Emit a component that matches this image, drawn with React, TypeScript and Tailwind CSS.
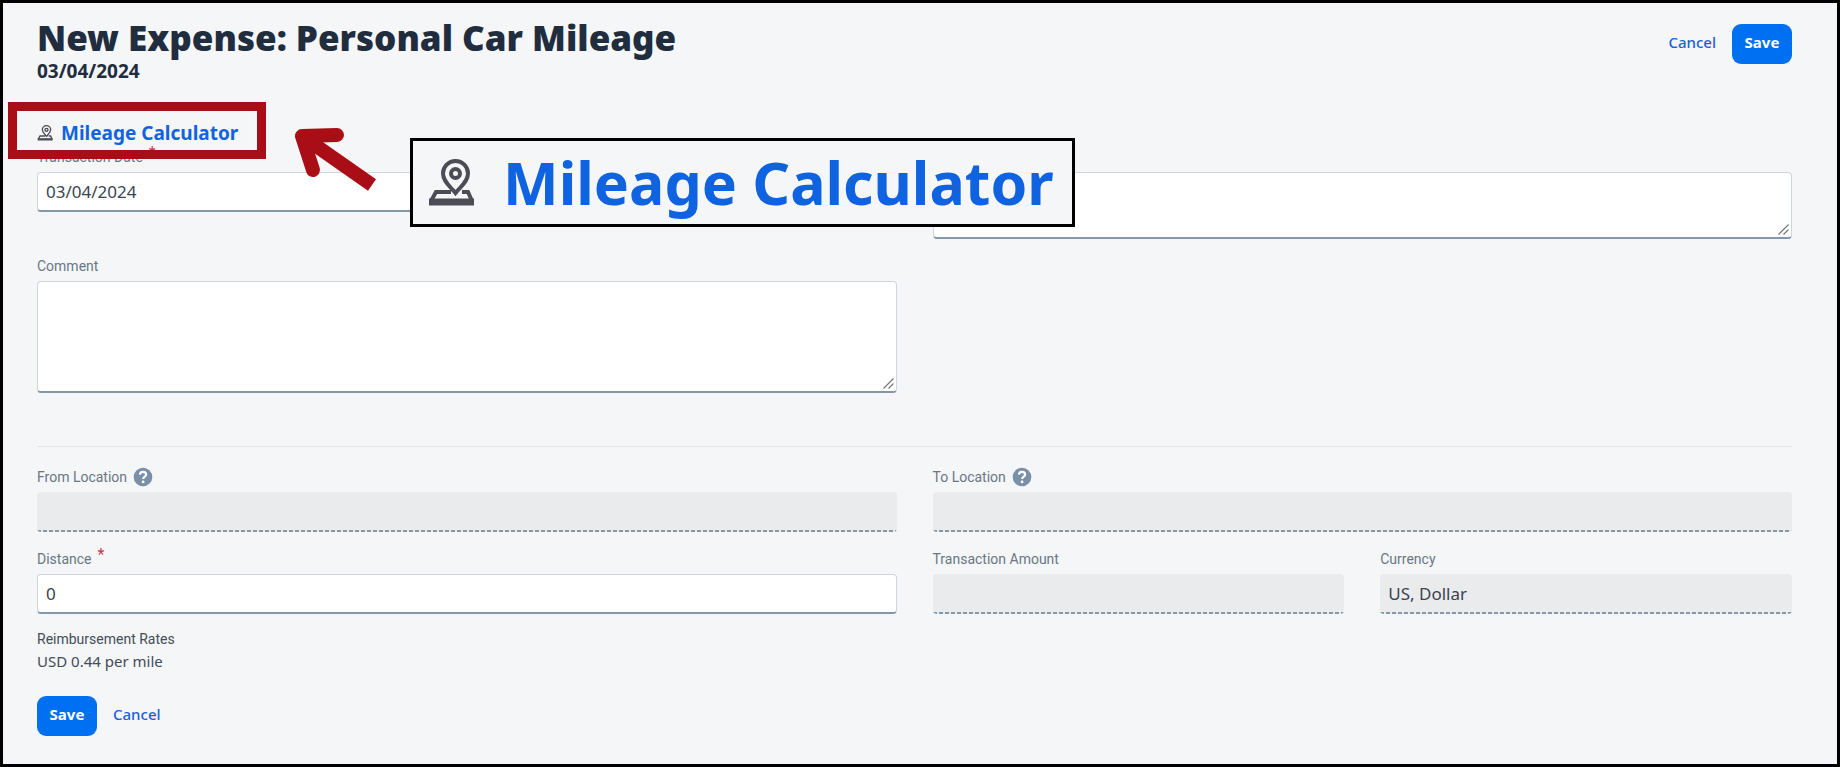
import React from 'react';
import clsx from 'clsx';

const EDITABLE = 'border border-[#cfd5dc] border-b-2 border-b-[#8496a9] bg-white';
const LOCKED =
  'pb-0.5 bg-[#eaebed] bg-[repeating-linear-gradient(90deg,#8798ab_0_4px,transparent_4px_6px)] bg-[length:100%_2px] bg-bottom bg-no-repeat';

function Label({ htmlFor, required, help, children }: {
  htmlFor: string;
  required?: boolean;
  help?: string;
  children: React.ReactNode;
}) {
  return (
    <div className="mb-[5px] flex h-5 items-center gap-1.5 font-[Roboto,sans-serif] text-[14px] leading-5 text-[#6a7685]">
      <label htmlFor={htmlFor} className="flex gap-1.5">
        {children}
        {required && <span className="-mt-1 text-[16px] text-[#c5384b]">*</span>}
      </label>
      {help && (
        <button type="button" aria-label={help}>
          <HelpIcon />
        </button>
      )}
    </div>
  );
}

function TextField({ id, value, disabled }: { id: string; value?: string; disabled?: boolean }) {
  return (
    <input
      id={id}
      type="text"
      defaultValue={value}
      disabled={disabled}
      className={clsx(
        'block h-10 w-full rounded-[4px] px-2 text-[17px] text-[#3b4350] outline-none',
        disabled ? LOCKED : EDITABLE
      )}
    />
  );
}

function TextArea({ className, ...rest }: React.ComponentProps<'textarea'>) {
  return (
    <div className="relative">
      <textarea
        {...rest}
        className={clsx('block w-full resize-none rounded-[4px] p-2 text-[17px] outline-none', EDITABLE, className)}
      />
      {/* Resize grip */}
      <svg
        viewBox="0 0 11 11"
        className="pointer-events-none absolute bottom-1 right-[3px] h-[11px] w-[11px]"
        stroke="#6f7278"
        strokeWidth="1.1"
        aria-hidden="true"
      >
        <path d="M.5 10.500l10-10M5.500 10.500l5-5" />
      </svg>
    </div>
  );
}

function HelpIcon() {
  return (
    <svg viewBox="0 0 20 20" className="block h-5 w-5" aria-hidden="true">
      <circle cx="10" cy="10" r="9.3" fill="#7a8fa8" />
      <path
        d="M6.9 7.6C7 5.8 8.2 4.8 10 4.8s3.1 1 3.1 2.6c0 2.3-2.9 2.3-2.9 4.5"
        fill="none"
        stroke="#fff"
        strokeWidth="2.2"
      />
      <circle cx="10.1" cy="14.9" r="1.4" fill="#fff" />
    </svg>
  );
}

function PinIcon({ className }: { className: string }) {
  return (
    <svg viewBox="0 0 48 48" className={className} fill="none" stroke="#4b4c56" aria-hidden="true">
      <path
        d="M28.500 34C24 28 16 23 16 14.500a12.500 12.500 0 0 1 25 0C41 23 33 28 28.500 34Z"
        strokeWidth="4"
      />
      <circle cx="28.500" cy="14.500" r="4.500" strokeWidth="4" />
      <path d="M24 33H9L4 42M35 33h6l4 9" strokeWidth="4" />
      <path d="M2 43h45" strokeWidth="7" />
    </svg>
  );
}

function Arrow() {
  return (
    <svg
      viewBox="0 0 86 68"
      className="pointer-events-none absolute left-[290px] top-[123px] h-[68px] w-[86px]"
      fill="none"
      stroke="#a90d15"
      strokeWidth="14"
      aria-hidden="true"
    >
      <path d="M44 9 9 10l11 34" strokeLinecap="round" strokeLinejoin="round" />
      <path d="M9 10l70 49" />
    </svg>
  );
}

function SaveButton() {
  return (
    <button type="button" className="h-10 w-[60px] rounded-[9px] bg-[#0070f2] pb-[3px] text-[15px] font-bold text-white">
      Save
    </button>
  );
}

function CancelButton() {
  return (
    <button type="button" className="h-10 pb-[3px] text-[15px] font-medium text-[#1a5fdc]">
      Cancel
    </button>
  );
}

export default function App() {
  return (
    <main className="relative min-h-screen border-[3px] border-black bg-[#f4f6f8] pb-7 pl-[34px] pr-[45px] font-['Noto_Sans',sans-serif]">
      <header className="flex items-start justify-between pt-[14px] text-[#1f2d3e]">
        <div>
          <h1 className="text-[35px] font-black leading-[42px]">New Expense: Personal Car Mileage</h1>
          <p className="text-[19px] font-bold leading-6">03/04/2024</p>
        </div>
        <div className="mt-[7px] flex gap-4">
          <CancelButton />
          <SaveButton />
        </div>
      </header>

      <div className="mt-[38px] flex h-6">
        <a href="#calculator" className="flex items-center gap-2 text-[19px] font-bold leading-6 text-[#1263df]">
          <PinIcon className="h-4 w-4" />
          Mileage Calculator
        </a>
      </div>

      <form className="mt-0.5">
        <div className="grid grid-cols-2 gap-x-9 gap-y-[17px]">
          <div>
            <Label htmlFor="date" required>Transaction Date</Label>
            <TextField id="date" value="03/04/2024" />
          </div>
          <div className="pt-[25px]">
            <TextArea aria-label="Trip details" className="h-[67px]" />
          </div>
          <div>
            <Label htmlFor="comment">Comment</Label>
            <TextArea id="comment" className="h-28" />
          </div>
        </div>

        <hr className="mb-5 mt-[53px] border-[#e3e5e8]" />

        <div className="grid grid-cols-2 gap-x-9 gap-y-[17px]">
          <div>
            <Label htmlFor="from" help="About From Location">From Location</Label>
            <TextField id="from" disabled />
          </div>
          <div>
            <Label htmlFor="to" help="About To Location">To Location</Label>
            <TextField id="to" disabled />
          </div>
          <div>
            <Label htmlFor="distance" required>Distance</Label>
            <TextField id="distance" value="0" />
          </div>
          <div className="grid grid-cols-2 gap-x-9">
            <div>
              <Label htmlFor="amount">Transaction Amount</Label>
              <TextField id="amount" disabled />
            </div>
            <div>
              <Label htmlFor="currency">Currency</Label>
              <TextField id="currency" value="US, Dollar" disabled />
            </div>
          </div>
        </div>

        <div className="mt-[15px] text-[#444c58]">
          <p className="font-[Roboto,sans-serif] text-[14px] leading-5">Reimbursement Rates</p>
          <p className="text-[15px] leading-6">USD 0.44 per mile</p>
        </div>

        <div className="mt-[23px] flex gap-4">
          <SaveButton />
          <CancelButton />
        </div>
      </form>

      {/* Callout: box around the link, arrow, enlarged copy of the link */}
      <div className="pointer-events-none absolute left-[5px] top-[99px] h-[57px] w-[258px] border-[9px] border-[#a90d15]" />
      <Arrow />
      <div className="absolute left-[407px] top-[135px] flex h-[89px] w-[665px] items-center gap-7 border-[3px] border-black bg-[#f4f6f8] pl-[14px]">
        <PinIcon className="h-12 w-12" />
        <span className="whitespace-nowrap text-[59px] font-bold leading-none text-[#0f63e0]">Mileage Calculator</span>
      </div>
    </main>
  );
}
